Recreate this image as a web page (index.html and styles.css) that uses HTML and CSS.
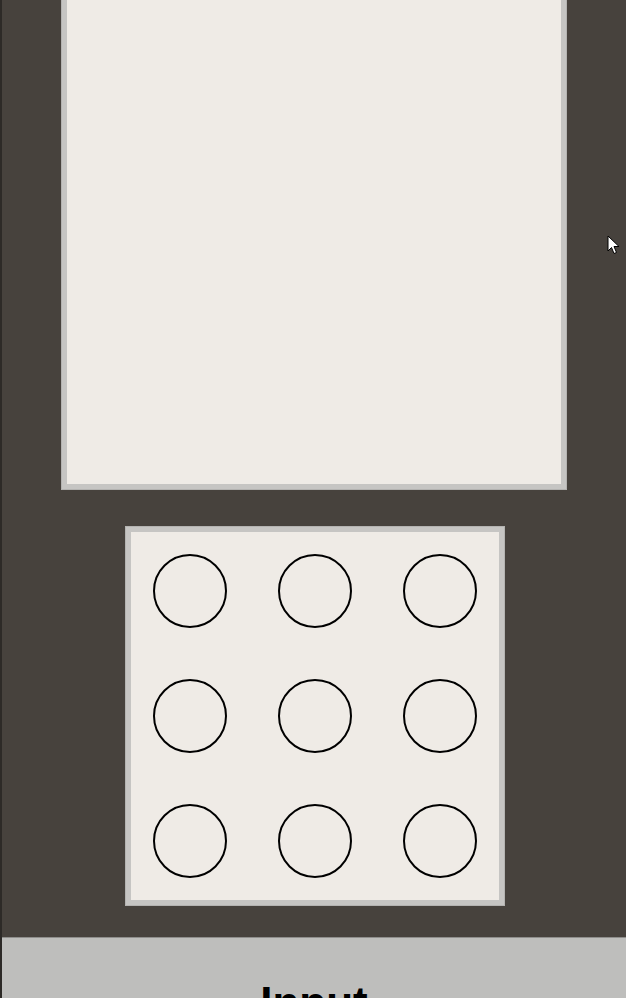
FILE: index.html
```html
<!DOCTYPE html>
<html lang="en">

<head>
 <meta charset="UTF-8">
 <meta name="viewport" content="width=device-width, initial-scale=1.0">
 <title>Keypad</title>
<link rel="stylesheet" href="styles.css">
</head>

<body>
 <div class="screen">
  <div class="display"></div>

  <div class="keypad">
   <div class="key"></div>
   <div class="key"></div>
   <div class="key"></div>
   <div class="key"></div>
   <div class="key"></div>
   <div class="key"></div>
   <div class="key"></div>
   <div class="key"></div>
   <div class="key"></div>
  </div>

  <div class="footer">Input</div>
 </div>

 <svg class="cursor" width="14" height="20" viewBox="0 0 14 20">
  <path d="M1 1 L1 16 L4.5 12.5 L7 18.5 L9.5 17.5 L7 11.5 L12 11.5 Z" fill="#fff" stroke="#000" stroke-width="1" stroke-linejoin="miter"/>
 </svg>
</body>

</html>
```

FILE: styles.css
```css
 body {
  margin: 0;
  background-color: #47423d;
  font-family: 'Liberation Sans', Arial, sans-serif;
  overflow: hidden;
 }

 .screen {
  height: 998px;
  border-left: 2px solid #2d2a27;
  display: flex;
  flex-direction: column;
  align-items: center;
  overflow: hidden;
  box-sizing: border-box;
 }

 .display {
  flex: none;
  width: 506px;
  height: 500px;
  margin-top: -10px;
  background-color: #efebe6;
  border: 1px solid #b4b3b1;
  box-shadow: inset 0 0 0 5px #c6c5c3;
  box-sizing: border-box;
 }

 .keypad {
  flex: none;
  width: 380px;
  height: 380px;
  margin-top: 36px;
  margin-left: 2px;
  padding: 27px;
  display: grid;
  grid-template-columns: repeat(3, 74px);
  grid-template-rows: repeat(3, 74px);
  gap: 51px;
  background-color: #efebe6;
  border: 1px solid #b4b3b1;
  box-shadow: inset 0 0 0 5px #c6c5c3;
  box-sizing: border-box;
 }

 .key {
  border: 2px solid #000;
  border-radius: 50%;
  box-sizing: border-box;
 }

 .footer {
  flex: 1;
  align-self: stretch;
  margin-top: 31px;
  padding-top: 40px;
  background-color: #bebebc;
  border-top: 1px solid #8f8e8c;
  text-align: center;
  font-size: 44px;
  font-weight: bold;
  color: #000;
 }

 .cursor {
  position: absolute;
  left: 607px;
  top: 235px;
 }
```
